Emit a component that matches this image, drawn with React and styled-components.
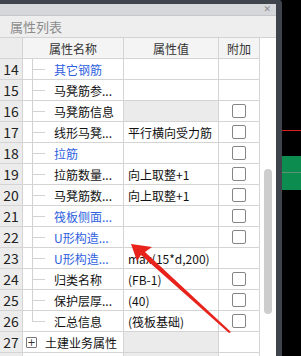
import React from 'react';
import styled, { createGlobalStyle } from 'styled-components';

const GlobalStyle = createGlobalStyle`
  html, body {
    margin: 0;
    padding: 0;
    background: #000;
  }
  body {
    font-family: "Noto Sans CJK SC", "Microsoft YaHei", "Liberation Sans", sans-serif;
  }
`;

const Screen = styled.div`
  display: flex;
  width: 301px;
  height: 356px;
  overflow: hidden;
`;

const Panel = styled.div`
  position: relative;
  display: flex;
  flex-direction: column;
  width: 276px;
  background: #f0f0f0;
  border-top: 4px solid #3f434b;
  box-sizing: border-box;
`;

const TitleBar = styled.div`
  display: flex;
  align-items: center;
  justify-content: flex-end;
  height: 11px;
  padding-right: 5px;
  background: #d5d7db;
  border-bottom: 1px solid #c4c6ca;
`;

const Close = styled.span`
  font-family: "DejaVu Sans", sans-serif;
  font-size: 9px;
  line-height: 9px;
  color: #8a8c90;
`;

const Caption = styled.div`
  display: flex;
  align-items: center;
  height: 21px;
  padding-left: 10px;
  font-size: 13px;
  color: #8c8c8c;
  background: #eeeeee;
  border-bottom: 1px solid #d2d2d2;
`;

const Body = styled.div`
  display: flex;
  flex: 1;
  overflow: hidden;
`;

const Table = styled.div`
  display: grid;
  grid-template-columns: 23px 101px 95px 41px;
  grid-auto-rows: 21px;
  width: 260px;
  align-content: start;
`;

const Cell = styled.div`
  display: flex;
  align-items: center;
  box-sizing: border-box;
  border-right: 1px solid #d4d4d4;
  border-bottom: 1px solid #d4d4d4;
  background: ${p => (p.$shade ? '#ebebeb' : '#fff')};
  font-size: 12px;
  color: #111;
  white-space: nowrap;
  overflow: hidden;
`;

const HeadCell = styled(Cell)`
  justify-content: center;
  background: ${p => (p.$shade ? '#ececec' : '#f4f4f4')};
  color: #333;
`;

const NumCell = styled(Cell)`
  justify-content: center;
  background: #ececec;
  font-size: 14px;
  color: #222;
`;

const NameCell = styled(Cell)`
  position: relative;
  padding-left: ${p => (p.$group ? '22px' : '31px')};
  color: ${p => (p.$blue ? '#2f5fe0' : '#111')};
`;

const TreeV = styled.span`
  position: absolute;
  left: 9px;
  top: -1px;
  bottom: ${p => (p.$last ? '10px' : '-1px')};
  width: 1px;
  background: #d2d2d2;
`;

const TreeH = styled.span`
  position: absolute;
  left: 9px;
  top: 10px;
  width: 13px;
  height: 1px;
  background: #d2d2d2;
`;

const PlusBox = styled.span`
  position: absolute;
  left: 3px;
  top: 5px;
  width: 9px;
  height: 9px;
  border: 1px solid #777;
  border-radius: 1px;
  display: flex;
  align-items: center;
  justify-content: center;
  font-size: 10px;
  line-height: 9px;
  color: #333;
  font-family: "DejaVu Sans", sans-serif;
`;

const ValueCell = styled(Cell)`
  padding-left: 4px;
`;

const AddCell = styled(Cell)`
  justify-content: center;
`;

const Check = styled.span`
  width: 12px;
  height: 12px;
  border: 1px solid #858585;
  border-radius: 2px;
  background: #fff;
`;

const ScrollTrack = styled.div`
  width: 16px;
  background: #fff;
  display: flex;
  justify-content: center;
  padding-top: 131px;
  box-sizing: border-box;
`;

const Thumb = styled.div`
  width: 8px;
  height: 145px;
  border-radius: 4px;
  background: #cdcdcd;
`;

const Frame = styled.div`
  width: 6px;
  background: #3f434b;
  border-top-right-radius: 3px;
`;

const Canvas = styled.div`
  flex: 1;
  display: flex;
  flex-direction: column;
  background: #000;
  padding-top: 130px;
`;

const RedLine = styled.div`
  height: 1px;
  background: #d81e1e;
  margin-bottom: 25px;
`;

const GreenBlock = styled.div`
  height: 34px;
  background: #0c8c4f;
  display: flex;
  flex-direction: column;
  padding-top: 16px;
  box-sizing: border-box;
`;

const GreenLine = styled.div`
  height: 1px;
  background: #5f8f74;
`;

const Arrow = styled.svg`
  position: absolute;
  left: 0;
  top: 0;
  pointer-events: none;
`;

const rows = [
  { n: 14, name: '其它钢筋', blue: true },
  { n: 15, name: '马凳筋参...' },
  { n: 16, name: '马凳筋信息', shade: true, check: true },
  { n: 17, name: '线形马凳...', value: '平行横向受力筋', check: true },
  { n: 18, name: '拉筋', blue: true, check: true },
  { n: 19, name: '拉筋数量...', value: '向上取整+1', check: true },
  { n: 20, name: '马凳筋数...', value: '向上取整+1', check: true },
  { n: 21, name: '筏板侧面...', blue: true, check: true },
  { n: 22, name: 'U形构造...', blue: true, check: true },
  { n: 23, name: 'U形构造...', blue: true, value: 'max(15*d,200)' },
  { n: 24, name: '归类名称', value: '(FB-1)', check: true },
  { n: 25, name: '保护层厚...', value: '(40)', check: true },
  { n: 26, name: '汇总信息', value: '(筏板基础)', check: true, last: true },
  { n: 27, name: '土建业务属性', group: true, shade: true },
  { n: 28, name: '', group: true, shade: true }
];

export default function App() {
  return (
    <>
      <GlobalStyle />
      <Screen>
        <Panel>
          <TitleBar>
            <Close>✕</Close>
          </TitleBar>
          <Caption>属性列表</Caption>
          <Body>
            <Table>
              <HeadCell $shade />
              <HeadCell>属性名称</HeadCell>
              <HeadCell>属性值</HeadCell>
              <HeadCell>附加</HeadCell>
              {rows.map(r => (
                <React.Fragment key={r.n}>
                  <NumCell>{r.n < 28 ? r.n : ''}</NumCell>
                  <NameCell $blue={r.blue} $group={r.group}>
                    {r.group ? (
                      r.name && <PlusBox>+</PlusBox>
                    ) : (
                      <>
                        <TreeV $last={r.last} />
                        <TreeH />
                      </>
                    )}
                    {r.name}
                  </NameCell>
                  <ValueCell $shade={r.shade}>{r.value}</ValueCell>
                  <AddCell>{r.check && <Check />}</AddCell>
                </React.Fragment>
              ))}
            </Table>
            <ScrollTrack>
              <Thumb />
            </ScrollTrack>
          </Body>
          <Arrow width="276" height="356" viewBox="0 0 276 356">
            <polygon points="131,240 152,243 145,248 231,328 229,329 141,251 137,257" fill="#e8231c" />
          </Arrow>
        </Panel>
        <Frame />
        <Canvas>
          <RedLine />
          <GreenBlock>
            <GreenLine />
          </GreenBlock>
        </Canvas>
      </Screen>
    </>
  );
}
